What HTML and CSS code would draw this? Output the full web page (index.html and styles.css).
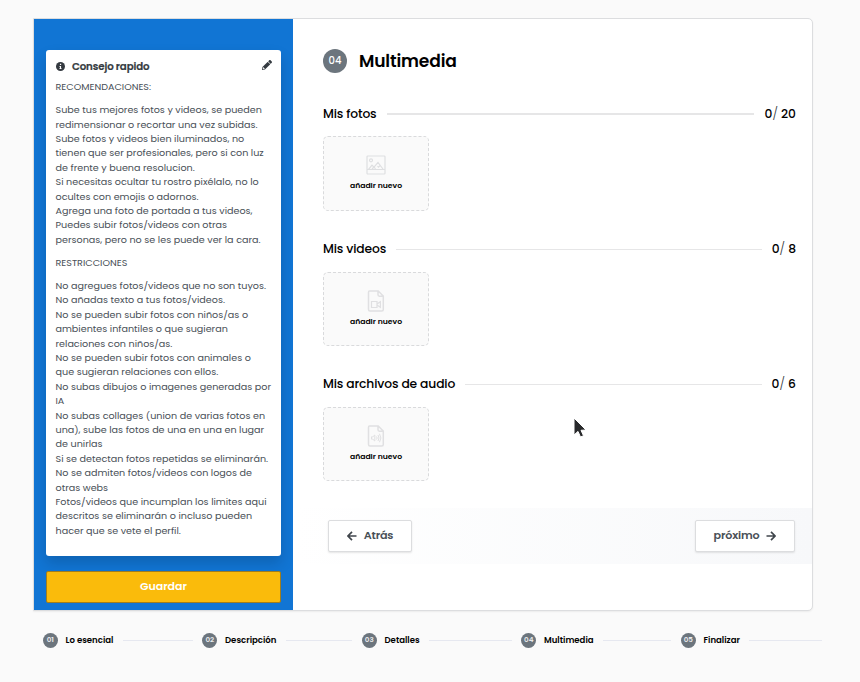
FILE: index.html
```html
<!DOCTYPE html>
<html lang="es">
<head>
<meta charset="utf-8">
<title>Multimedia</title>
<link rel="stylesheet" href="styles.css">
</head>
<body>
<main class="card">
  <aside class="side">
    <section class="tip">
      <header class="tip-head">
        <svg class="info" viewBox="0 0 16 16"><circle cx="8" cy="8" r="8" fill="#343a40"/><path d="M6 7h3v4h1v1.5H6V11h1V8.500H6zM7 3.200h2.200v2.300H7z" fill="#fff"/></svg>
        <h2>Consejo rapido</h2>
        <svg class="pencil" viewBox="0 0 512 512"><path fill="#343a40" d="M498 142l-46 46c-5 5-13 5-17 0L324 77c-5-5-5-12 0-17l46-46c19-19 49-19 68 0l60 60c19 19 19 49 0 68zM284 100L22 362 0 484c-3 16 12 30 28 28l122-22 262-262c5-5 5-13 0-17L301 100c-4-5-12-5-17 0zM88 424h48v36l-64 12-32-32 12-64h36z"/></svg>
      </header>
      <p class="caps">RECOMENDACIONES:</p>
      <p>Sube tus mejores fotos y videos, se pueden<br>redimensionar o recortar una vez subidas.<br>Sube fotos y videos bien iluminados, no<br>tienen que ser profesionales, pero si con luz<br>de frente y buena resolucion.<br>Si necesitas ocultar tu rostro pixélalo, no lo<br>ocultes con emojis o adornos.<br>Agrega una foto de portada a tus videos,<br>Puedes subir fotos/videos con otras<br>personas, pero no se les puede ver la cara.</p>
      <p class="caps">RESTRICCIONES</p>
      <p>No agregues fotos/videos que no son tuyos.<br>No añadas texto a tus fotos/videos.<br>No se pueden subir fotos con niños/as o<br>ambientes infantiles o que sugieran<br>relaciones con niños/as.<br>No se pueden subir fotos con animales o<br>que sugieran relaciones con ellos.<br>No subas dibujos o imagenes generadas por<br>IA<br>No subas collages (union de varias fotos en<br>una), sube las fotos de una en una en lugar<br>de unirlas<br>Si se detectan fotos repetidas se eliminarán.<br>No se admiten fotos/videos con logos de<br>otras webs<br>Fotos/videos que incumplan los limites aqui<br>descritos se eliminarán o incluso pueden<br>hacer que se vete el perfil.</p>
    </section>
    <button class="save">Guardar</button>
  </aside>
  <section class="content">
    <header class="title"><span class="num">04</span><h1>Multimedia</h1></header>

    <section class="group">
      <div class="group-head"><h3>Mis fotos</h3><i class="rule thick"></i><span class="count">0<em>/</em> 20</span></div>
      <div class="drop photo">
        <svg width="20" height="20" viewBox="0 0 20 20" fill="none" stroke="#dedfe1" stroke-width="1.200"><rect x="1" y="1" width="18" height="18" rx=".8"/><path d="M1 14.500h18M2.500 14.500l3.500-4.300 2 2 4-4.800 5.300 7.100M6 14l2-2 1.500 2M14 10.700l-1.500 1.500-1-1"/><circle cx="5" cy="5.300" r="1.500"/></svg>
        <span>añadir nuevo</span>
      </div>
    </section>

    <section class="group">
      <div class="group-head"><h3>Mis videos</h3><i class="rule"></i><span class="count">0<em>/</em> 8</span></div>
      <div class="drop">
        <svg width="18" height="22" viewBox="0 0 18 22" fill="none" stroke="#e0e0e2" stroke-width="1.500"><path d="M2.500 1h8.700L16.300 6v13.500q0 1.500-1.500 1.500H3q-1.500 0-1.500-1.500V2.200Q1.500 1 2.500 1zM11 1v3.800q0 1.400 1.400 1.400h3.900"/><path stroke-width="1.200" d="M4.500 11.500h5.500v6H4.500zM10 14l3.400-2.300v5.600L10 15"/></svg>
        <span>añadir nuevo</span>
      </div>
    </section>

    <section class="group">
      <div class="group-head"><h3>Mis archivos de audio</h3><i class="rule"></i><span class="count">0<em>/</em> 6</span></div>
      <div class="drop">
        <svg width="18" height="22" viewBox="0 0 18 22" fill="none" stroke="#e0e0e2" stroke-width="1.500"><path d="M2.500 1h8.700L16.300 6v13.500q0 1.500-1.500 1.500H3q-1.500 0-1.500-1.500V2.200Q1.500 1 2.500 1zM11 1v3.800q0 1.400 1.400 1.400h3.900"/><path stroke-width="1" d="M4.500 11.800h1.300l2-1.800v6l-2-1.800H4.500zM9.500 11.500q1.300 1.500 0 3M11 10q2 3 0 6M12.500 8.800q2.800 4.200 0 8.400"/></svg>
        <span>añadir nuevo</span>
      </div>
    </section>

    <nav class="actions">
      <button class="nav-btn back"><svg width="10" height="10" viewBox="0 0 10 10"><path d="M9.500 5H1M5 .8L.9 5 5 9.200"/></svg><span>Atrás</span></button>
      <button class="nav-btn next"><span>próximo</span><svg width="10" height="10" viewBox="0 0 10 10"><path d="M.5 5H9M5 .8L9.100 5 5 9.200"/></svg></button>
    </nav>
  </section>
</main>
<ol class="steps">
  <li><b>01</b><span>Lo esencial</span><i></i></li>
  <li><b>02</b><span>Descripción</span><i></i></li>
  <li><b>03</b><span>Detalles</span><i></i></li>
  <li><b>04</b><span>Multimedia</span><i></i></li>
  <li><b>05</b><span>Finalizar</span><i></i></li>
</ol>
<svg class="cursor" viewBox="0 0 14 21"><path d="M1 1v17l4-3.600 2.500 5.600 3-1.300-2.500-5.400 5-.3z" fill="#292a2c" stroke="#fff" stroke-width="1"/></svg>
</body>
</html>
```

FILE: styles.css
```css
* { box-sizing: border-box; }
body {
  margin: 0;
  padding: 18px 0 0 33px;
  height: 682px;
  overflow: hidden;
  background: #fafafa;
  color: #000;
  font-family: Poppins, Inter, "Noto Sans", sans-serif;
}
h1, h2, h3, p, ol { margin: 0; padding: 0; }
svg { display: block; flex: none; }
button { font-family: inherit; padding: 0; }

.card {
  display: flex;
  width: 780px;
  height: 593px;
  border: 1px solid #dcdddf;
  border-radius: 0 5px 5px 0;
  background: #fff;
  box-shadow: 0 1px 2px rgba(0, 0, 0, .06);
  overflow: hidden;
}
.side {
  width: 259px;
  padding: 31px 12px 0;
  background: #1175d4;
}
.tip {
  height: 506px;
  padding: 9px 0 0 9.500px;
  border-radius: 3px;
  background: #fff;
  box-shadow: 0 7px 14px rgba(0, 0, 0, .16);
  white-space: nowrap;
}
.tip-head { display: flex; align-items: center; height: 15px; margin-bottom: 6px; }
.info { width: 9px; height: 9px; margin-right: 7.500px; }
.tip h2 { font-size: 10.200px; line-height: 15px; font-weight: 600; color: #343a40; letter-spacing: -.1px; -webkit-text-stroke: .2px #343a40; }
.pencil { width: 10px; height: 10px; margin: -4px 9px 0 auto; }
.tip p { font-size: 9.600px; line-height: 14.400px; color: #495057; margin-bottom: 8.700px; }
.save {
  display: block;
  width: 235px;
  height: 32px;
  margin-top: 15px;
  padding-bottom: 2px;
  border: 1px solid #a07d1c;
  border-radius: 2px;
  background: #fabb0b;
  color: #fff;
  font-size: 11px;
  font-weight: 600;
}

.content { flex: 1; padding: 29px 0 0 30px; }
.title { display: flex; align-items: center; height: 26px; margin-bottom: 31px; }
.num {
  display: grid;
  place-items: center;
  width: 24px;
  height: 24px;
  margin-right: 12px;
  border-radius: 50%;
  background: #6c757d;
  color: #fff;
  font-size: 10px;
  font-weight: 500;
}
.title h1 { font-size: 17.100px; line-height: 26px; font-weight: 600; letter-spacing: -.15px; }

.group { height: 135.200px; margin-right: 16px; }
.group-head { display: flex; align-items: center; height: 18px; margin-bottom: 13.400px; }
.group h3, .count { font-size: 12.300px; line-height: 18px; font-weight: 500; white-space: nowrap; }
.group h3 { letter-spacing: -.14px; }
.rule { flex: 1; height: 1px; margin: 0 10px; background: #e6e6e7; }
.thick { height: 2px; }
.count em { font-style: normal; font-weight: 300; color: #343a40; }
.drop {
  display: flex;
  flex-direction: column;
  align-items: center;
  width: 106px;
  height: 74px;
  padding-top: 17px;
  border: 1px dashed #d9dadc;
  border-radius: 5px;
  background: #fafafa;
}
.drop span { margin-top: 4px; font-size: 7.680px; line-height: 12px; font-weight: 600; }
.photo { height: 75px; padding-top: 18px; }
.photo span { margin-top: 5px; }

.actions {
  display: flex;
  justify-content: space-between;
  align-items: flex-start;
  height: 56px;
  margin: -2.600px 0 0 -30px;
  padding: 12px 17px 0 35px;
  background: linear-gradient(90deg, #fff, #f7f8fa);
}
.nav-btn {
  display: flex;
  align-items: center;
  justify-content: center;
  gap: 7px;
  height: 32px;
  border: 1px solid #dcdddf;
  border-radius: 2px;
  background: #fff;
  color: #495057;
  font-size: 11.200px;
  font-weight: 600;
  letter-spacing: -.2px;
  box-shadow: 0 1px 2px rgba(0, 0, 0, .1);
}
.nav-btn path { fill: none; stroke: #40464c; stroke-width: 1.700; }
.back { width: 84px; }
.next { width: 100px; }

.steps { display: grid; grid-template-columns: repeat(4, 159.500px) 141px; margin: 21px 0 0 9.800px; list-style: none; }
.steps li { display: flex; align-items: center; height: 16px; font-size: 8.550px; font-weight: 600; }
.steps b {
  display: grid;
  place-items: center;
  width: 15px;
  height: 15px;
  margin-right: 7.700px;
  border-radius: 50%;
  background: #6c757d;
  color: #e8eaec;
  font-size: 7.200px;
  font-weight: 600;
}
.steps i { flex: 1; height: 1px; margin: 0 9.500px; background: #e6e8f0; }
.steps li:last-child i { margin-right: 0; }

.cursor { position: absolute; left: 573px; top: 417px; width: 14px; height: 21px; }
```
